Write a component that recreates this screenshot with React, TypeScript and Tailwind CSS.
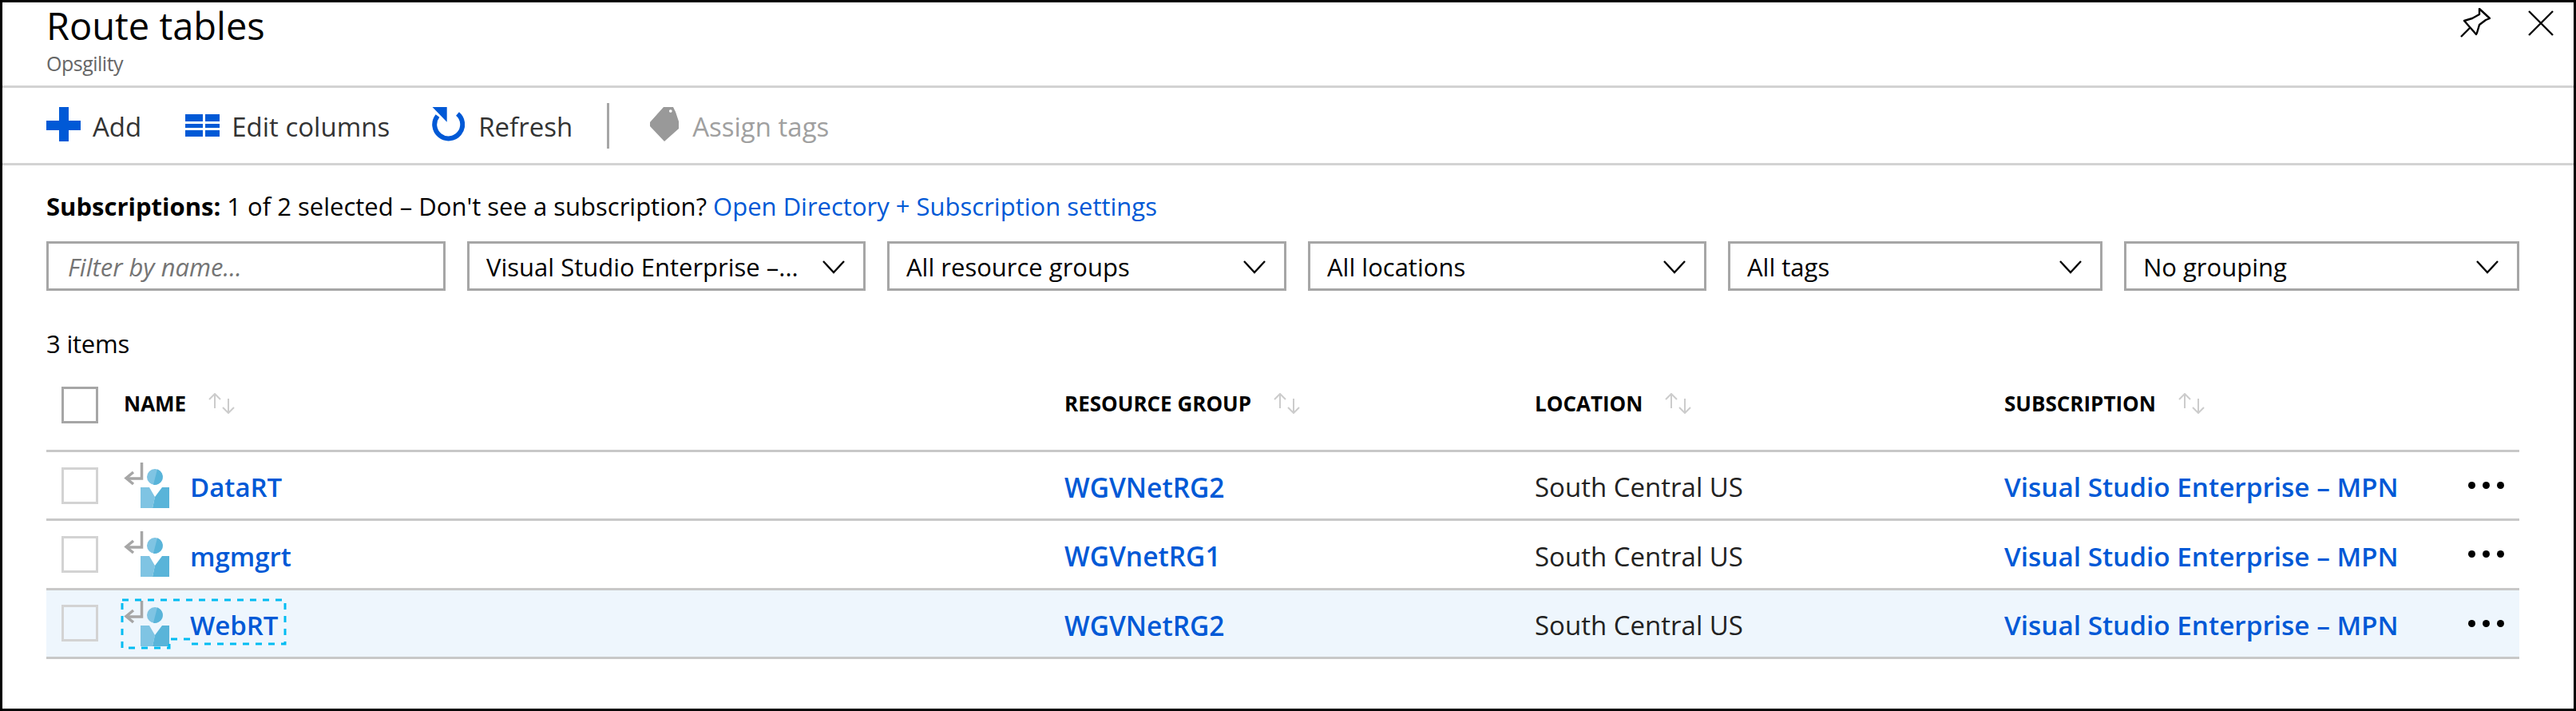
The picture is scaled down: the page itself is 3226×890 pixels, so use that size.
const font = { fontFamily: '"Open Sans", "Noto Sans", sans-serif' }

const rows = [
  { name: 'DataRT', group: 'WGVNetRG2', selected: false },
  { name: 'mgmgrt', group: 'WGVnetRG1', selected: false },
  { name: 'WebRT', group: 'WGVNetRG2', selected: true },
]

function PlusIcon() {
  return (
    <svg width="43" height="43" viewBox="0 0 43 43" fill="#0059d6">
      <rect x="16" width="12" height="43" />
      <rect y="17" width="43" height="12" />
    </svg>
  )
}

function ColumnsIcon() {
  return (
    <svg width="43" height="28" viewBox="0 0 43 28" fill="#0059d6" className="mt-[3px]">
      <rect width="22" height="9" />
      <rect x="25" width="18" height="9" />
      <rect y="12" width="22" height="5" />
      <rect x="25" y="12" width="18" height="5" />
      <rect y="20" width="22" height="8" />
      <rect x="25" y="20" width="18" height="8" />
    </svg>
  )
}

function RefreshIcon() {
  return (
    <svg width="41" height="43" viewBox="0 0 41 43" fill="none">
      <path d="M32 8.5 A17.5 17.5 0 1 1 7 11" stroke="#0059d6" strokeWidth="6" />
      <path d="M0.5 0 H18.7 V18.7 Z" fill="#0059d6" />
    </svg>
  )
}

function TagIcon() {
  return (
    <svg width="36" height="43" viewBox="0 0 36 43" fill="#999999">
      <path
        fillRule="evenodd"
        d="M0 19 L17 0 H29 L32 6 L36 18 V27 L18 43 L0 24 Z M25.8 3.2 a1.8 1.8 0 1 0 0.01 0 Z"
      />
    </svg>
  )
}

function PinIcon() {
  return (
    <svg width="38" height="38" viewBox="0 0 38 38" fill="none" stroke="#000" strokeWidth="2.4" strokeLinejoin="round">
      <path d="M1 36 L13 24" />
      <path d="M24 1 L37 13 L32 15 L24 21 L21 31 L20 33 L5 16 L15 13 L24 8 Z" fill="#fff" />
    </svg>
  )
}

function CloseIcon() {
  return (
    <svg width="32" height="32" viewBox="0 0 32 32" stroke="#000" strokeWidth="2.4">
      <path d="M1 1 L31 31 M31 1 L1 31" />
    </svg>
  )
}

function ChevronIcon() {
  return (
    <svg width="28" height="17" viewBox="0 0 28 17" fill="none" stroke="#000" strokeWidth="2.4" className="shrink-0">
      <path d="M1 1 L14 15 L27 1" />
    </svg>
  )
}

function SortIcon() {
  return (
    <svg width="33" height="26" viewBox="0 0 33 26" fill="none" stroke="#cccccc" strokeWidth="2">
      <path d="M8 1 V19 M1 8 L8 1 L15 8" />
      <path d="M25 7 V25 M18 18 L25 25 L32 18" />
    </svg>
  )
}

function RouteIcon() {
  return (
    <svg width="58" height="57" viewBox="0 0 58 57" fill="none" className="shrink-0">
      <path d="M22.5 0 V20 H4" stroke="#a6a6a6" strokeWidth="3.5" />
      <path d="M12 12 L3 19.5 L12 27" stroke="#a6a6a6" strokeWidth="3.5" />
      <circle cx="39" cy="18" r="10" fill="#7fc4e3" />
      <path d="M42 8.5 A10 10 0 0 1 37 27.8 Z" fill="#59b4d9" />
      <path d="M21 31 H32 L39 43 L36 57 H21 Z" fill="#7fc4e3" />
      <path d="M48 31 H57 V57 H36 L39 43 Z" fill="#59b4d9" />
    </svg>
  )
}

// focus ring goes round the icon and the link text separately, so it steps
function FocusOutline() {
  return (
    <svg width="208" height="64" viewBox="0 0 208 64" fill="none" className="absolute left-[-4px] top-[-3px] pointer-events-none">
      <path
        d="M2 2 H206 V57 H87 V51 H61 V62 H2 Z"
        stroke="#00bcf2"
        strokeWidth="3"
        strokeDasharray="8 8"
      />
    </svg>
  )
}

function Checkbox({ strong }: { strong?: boolean }) {
  return <div className={`w-[46px] h-[46px] border-[3px] ${strong ? 'border-[#a6a6a6]' : 'border-[#d3d3d3]'}`} />
}

function Dropdown({ label, width }: { label: string; width: string }) {
  return (
    <div className={`${width} h-[62px] border-[3px] border-[#a6a6a6] flex items-center justify-between pt-[2px] pl-[21px] pr-[23px] text-[31px] text-black`}>
      <span>{label}</span>
      <ChevronIcon />
    </div>
  )
}

function ToolbarButton({ icon, label, disabled, gap }: { icon: React.ReactNode; label: string; disabled?: boolean; gap: string }) {
  return (
    <div className={`flex items-center mb-[3px] ${gap} text-[33px] ${disabled ? 'text-[#a0a0a0]' : 'text-[#333]'}`}>
      {icon}
      <span className="pt-[7px]">{label}</span>
    </div>
  )
}

function HeaderLabel({ label }: { label: string }) {
  return (
    <div className="flex items-center gap-[28px] mb-[4px]">
      <span className="text-[26px] font-bold text-black">{label}</span>
      <SortIcon />
    </div>
  )
}

const gridCols = 'grid grid-cols-[97px_1178px_589px_588px_1fr] items-center'

export default function App() {
  return (
    <div style={font} className="w-[3226px] h-[890px] border-[3px] border-black bg-white flex flex-col overflow-hidden">
      <div className="h-[104px] shrink-0 flex justify-between pl-[55px] pr-[25px]">
        <div>
          <h1 className="text-[47px] leading-[52px] mt-[3px] text-black">Route tables</h1>
          <p className="text-[25px] leading-[30px] mt-[6px] tracking-[-0.5px] text-[#666]">Opsgility</p>
        </div>
        <div className="flex gap-[47px] pt-[7px] items-start">
          <PinIcon />
          <div className="pt-[3px]">
            <CloseIcon />
          </div>
        </div>
      </div>
      <div className="h-[100px] shrink-0 border-y-[3px] border-[#d3d3d3] flex items-center pl-[55px]">
        <ToolbarButton icon={<PlusIcon />} label="Add" gap="gap-[15px]" />
        <div className="ml-[55px]">
          <ToolbarButton icon={<ColumnsIcon />} label="Edit columns" gap="gap-[15px]" />
        </div>
        <div className="ml-[53px]">
          <ToolbarButton icon={<RefreshIcon />} label="Refresh" gap="gap-[17px]" />
        </div>
        <div className="ml-[43px] w-[3px] h-[57px] bg-[#a6a6a6]" />
        <div className="ml-[51px]">
          <ToolbarButton icon={<TagIcon />} label="Assign tags" gap="gap-[17px]" disabled />
        </div>
      </div>
      <div className="flex-1 pl-[55px] pr-[68px]">
        <p className="mt-[33px] text-[31px] leading-[36px] text-black">
          <span className="font-bold">Subscriptions:</span>
          <span className="ml-[8px]">1 of 2 selected – Don't see a subscription? </span>
          <span className="text-[#0059d6]">Open Directory + Subscription settings</span>
        </p>
        <div className="mt-[26px] flex gap-[27px]">
          <input
            readOnly
            placeholder="Filter by name..."
            className="w-[500px] h-[62px] border-[3px] border-[#a6a6a6] px-[24px] pt-[2px] text-[31px] italic placeholder:text-[#757575] outline-none"
          />
          <Dropdown label="Visual Studio Enterprise –..." width="w-[499px]" />
          <Dropdown label="All resource groups" width="w-[500px]" />
          <Dropdown label="All locations" width="w-[499px]" />
          <Dropdown label="All tags" width="w-[469px]" />
          <Dropdown label="No grouping" width="flex-1" />
        </div>
        <p className="mt-[49px] text-[31px] leading-[34px] tracking-[-0.2px] text-black">3 items</p>
        <div className={`${gridCols} mt-[26px] h-[93px] border-b-[3px] border-[#c8c8c8] pb-[22px]`}>
          <div className="pl-[19px]">
            <Checkbox strong />
          </div>
          <HeaderLabel label="NAME" />
          <HeaderLabel label="RESOURCE GROUP" />
          <HeaderLabel label="LOCATION" />
          <HeaderLabel label="SUBSCRIPTION" />
        </div>
        {rows.map((row) => (
          <div
            key={row.name}
            className={`${gridCols} h-[86.33px] border-b-[3px] border-[#c8c8c8] ${row.selected ? 'bg-[#eef6fd]' : ''}`}
          >
            <div className="pl-[19px]">
              <Checkbox />
            </div>
            <div className="relative flex items-center gap-[25px]">
              <RouteIcon />
              <span className="text-[33px] pt-[5px] font-semibold text-[#0059d6]">{row.name}</span>
              {row.selected && <FocusOutline />}
            </div>
            <span className="text-[33.5px] pt-[5px] font-semibold text-[#0059d6]">{row.group}</span>
            <span className="text-[33px] pt-[5px] text-[#222]">South Central US</span>
            <div className="flex items-center justify-between pr-[19px]">
              <span className="text-[33.3px] pt-[5px] font-semibold text-[#0059d6]">Visual Studio Enterprise – MPN</span>
              <div className="flex gap-[9px]">
                <span className="w-[9px] h-[9px] rounded-full bg-black" />
                <span className="w-[9px] h-[9px] rounded-full bg-black" />
                <span className="w-[9px] h-[9px] rounded-full bg-black" />
              </div>
            </div>
          </div>
        ))}
      </div>
    </div>
  )
}
